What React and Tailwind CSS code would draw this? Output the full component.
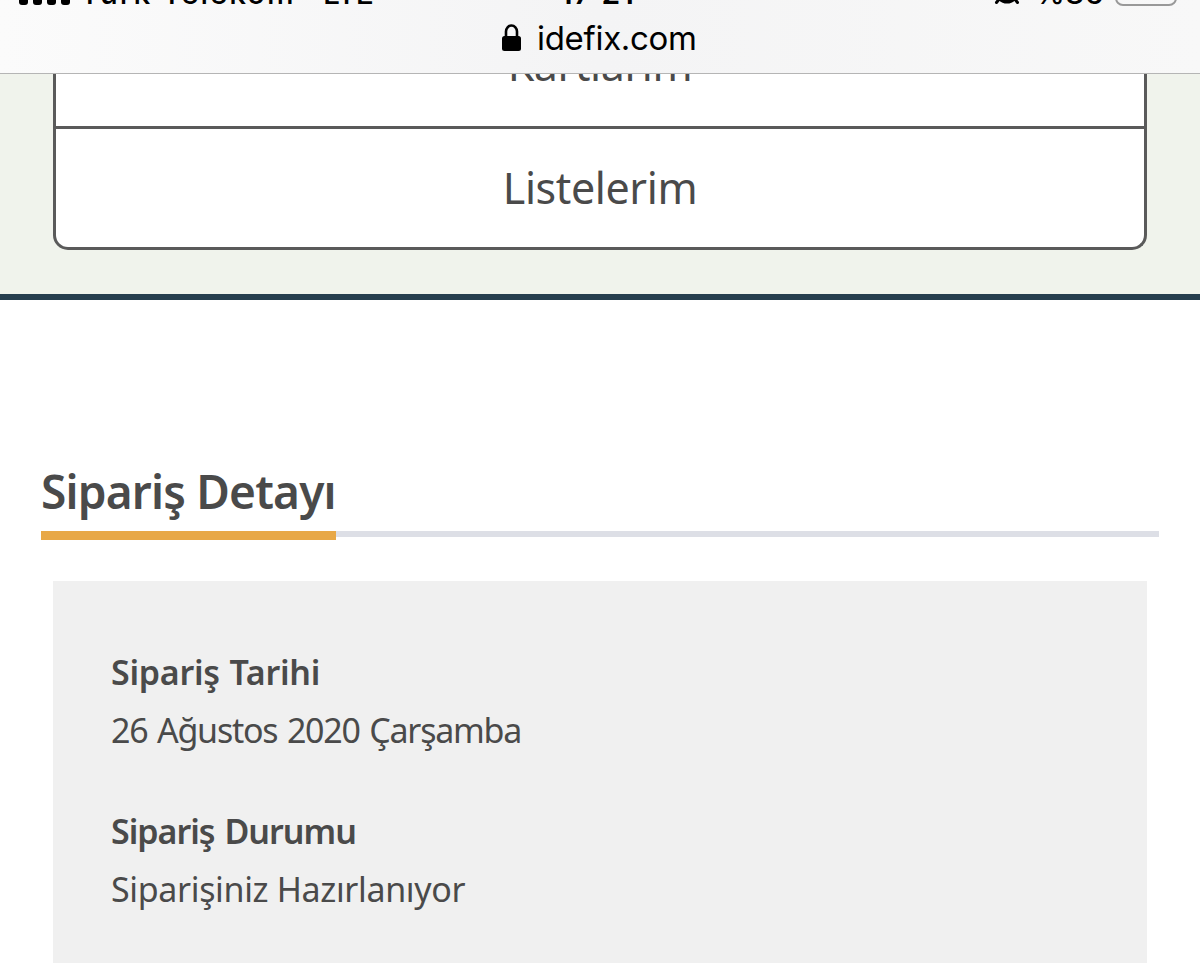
import React from 'react';

const StatusBar = () => {
    return (
        <div className="h-1.5 w-full relative overflow-hidden text-black text-[30px] leading-[30px] font-medium">
            <div className="absolute left-[19px] bottom-[1px] flex gap-[5px]">
                <span className="w-[9px] h-5 rounded-[3px] bg-black"></span>
                <span className="w-[9px] h-5 rounded-[3px] bg-black"></span>
                <span className="w-[9px] h-5 rounded-[3px] bg-black"></span>
                <span className="w-[9px] h-5 rounded-[3px] bg-black"></span>
            </div>
            <span className="absolute left-[80px] bottom-[-2px] whitespace-nowrap tracking-[1.8px]">Türk Telekom</span>
            <span className="absolute left-[323px] bottom-[-2px] tracking-[-0.5px]">LTE</span>
            <span className="absolute left-[560px] bottom-[-2px] font-semibold tracking-[1px]">
                17<span className="relative -top-1">:</span>21
            </span>
            <svg className="absolute left-[994px] bottom-0.5" width="26" height="28" viewBox="0 0 26 28">
                <circle cx="13" cy="16" r="11.5" fill="#000" />
                <path d="M6 22l-3.500 4.500M20 22l3.500 4.500" stroke="#000" strokeWidth="3" strokeLinecap="round" />
            </svg>
            <span className="absolute left-[1035px] bottom-[-2px] tracking-[0.5px]">%86</span>
            <span className="absolute left-[1115px] bottom-0 w-[62px] h-7 rounded-lg border-2 border-[#999]"></span>
        </div>
    )
}

const AddressBar = () => {
    return (
        <div className="flex items-start h-[67px] pl-[502px] text-black">
            <svg className="mt-[18px] w-5 h-7 shrink-0" viewBox="0 0 20 28" fill="none">
                <path d="M4 13V7.5a5.500 6 0 0 1 11 0V13" stroke="#000" strokeWidth="2.6" />
                <rect x="0" y="12" width="19" height="15" rx="2.5" fill="#000" />
            </svg>
            <span className="ml-[15px] mt-3 text-[33px] leading-10 tracking-[-0.3px]">idefix.com</span>
        </div>
    )
}

const menuItems = ['Kartlarım', 'Listelerim'];

const details = [
    {
        title: 'Sipariş Tarihi',
        titleClass: 'tracking-[-0.25px] [word-spacing:1px]',
        value: '26 Ağustos 2020 Çarşamba',
        valueClass: 'tracking-[-1.25px] [word-spacing:2px]',
    },
    {
        title: 'Sipariş Durumu',
        titleClass: 'tracking-[-1px] [word-spacing:2px]',
        value: 'Siparişiniz Hazırlanıyor',
        valueClass: 'tracking-[-0.35px]',
    },
];

const App = () => {
    return (
        <div className="h-[963px] w-full overflow-hidden bg-white text-[#4a4a4a] font-['Trebuchet_MS','Noto_Sans',sans-serif]">
            <header className="h-[74px] border-b border-[#b5b5b5] bg-linear-to-r from-[#fbfbfb] via-[#f4f4f5] to-[#f8f8f8] font-['Inter',sans-serif]">
                <StatusBar />
                <AddressBar />
            </header>

            <section className="h-[226px] px-[53px] bg-[#f0f3ec] border-b-[6px] border-[#263e4e] overflow-hidden">
                <ul className="h-[176px] flex flex-col justify-end overflow-hidden bg-white border-x-3 border-b-3 border-[#5a5a5a] rounded-b-[15px] text-[43px] tracking-[-0.4px] text-center">
                    {menuItems.map((item, i) => (
                        <li key={item} className={i === 0 ? "h-[121px] shrink-0 leading-[119px]" : "h-[121px] shrink-0 border-t-3 border-[#5a5a5a] leading-[117px]"}>
                            {item}
                        </li>
                    ))}
                </ul>
            </section>

            <main className="px-[41px] pt-[161px]">
                <div className="flex h-[79px] items-start">
                    <h1 className="w-[295px] h-[79px] border-b-9 border-[#e8a847] text-[46px] leading-[61px] font-semibold tracking-[-0.8px] whitespace-nowrap">
                        Sipariş Detayı
                    </h1>
                    <div className="flex-1 mt-[70px] h-1.5 bg-[#dddfe6]"></div>
                </div>

                <div className="mx-3 mt-[41px] h-[383px] pl-[58px] pt-[62px] bg-[#f0f0f0] text-[34px] leading-[58px]">
                    {details.map((detail) => (
                        <div key={detail.title} className="mb-[43px]">
                            <h2 className={`font-semibold ${detail.titleClass}`}>{detail.title}</h2>
                            <p className={detail.valueClass}>{detail.value}</p>
                        </div>
                    ))}
                </div>
            </main>
        </div>
    )
}

export default App
